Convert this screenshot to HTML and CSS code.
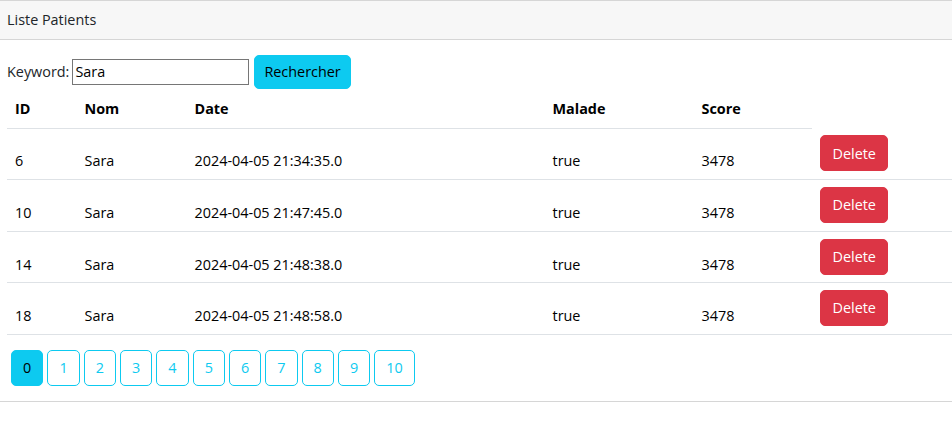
FILE: index.html
```html
<!DOCTYPE html>
<html lang="fr">
<head>
<meta charset="utf-8">
<title>Liste Patients</title>
<link rel="stylesheet" href="styles.css">
</head>
<body>
<div class="card">
  <div class="card-header">Liste Patients</div>
  <div class="card-body">
    <form class="search">
      <label class="search-label" for="kw">Keyword:</label>
      <input class="search-input" id="kw" type="text" value="Sara">
      <button class="btn btn-info" type="button">Rechercher</button>
    </form>
    <table class="table">
      <colgroup>
        <col class="c-id"><col class="c-nom"><col class="c-date"><col class="c-malade"><col class="c-score"><col class="c-action">
      </colgroup>
      <thead>
        <tr><th>ID</th><th>Nom</th><th>Date</th><th>Malade</th><th>Score</th></tr>
      </thead>
      <tbody>
        <tr><td>6</td><td>Sara</td><td>2024-04-05 21:34:35.0</td><td>true</td><td>3478</td><td class="action"><a class="btn btn-danger">Delete</a></td></tr>
        <tr><td>10</td><td>Sara</td><td>2024-04-05 21:47:45.0</td><td>true</td><td>3478</td><td class="action"><a class="btn btn-danger">Delete</a></td></tr>
        <tr><td>14</td><td>Sara</td><td>2024-04-05 21:48:38.0</td><td>true</td><td>3478</td><td class="action"><a class="btn btn-danger">Delete</a></td></tr>
        <tr><td>18</td><td>Sara</td><td>2024-04-05 21:48:58.0</td><td>true</td><td>3478</td><td class="action"><a class="btn btn-danger">Delete</a></td></tr>
      </tbody>
    </table>
    <ul class="pages">
      <li><a class="page active">0</a></li>
      <li><a class="page">1</a></li>
      <li><a class="page">2</a></li>
      <li><a class="page">3</a></li>
      <li><a class="page">4</a></li>
      <li><a class="page">5</a></li>
      <li><a class="page">6</a></li>
      <li><a class="page">7</a></li>
      <li><a class="page">8</a></li>
      <li><a class="page">9</a></li>
      <li><a class="page">10</a></li>
    </ul>
  </div>
</div>
</body>
</html>
```

FILE: styles.css
```css
* { box-sizing: border-box; }

html, body {
  margin: 0;
  padding: 0;
  background: #fff;
  overflow: hidden;
}

body {
  font-family: "Open Sans", "Noto Sans", sans-serif;
  font-size: 14.4px;
  line-height: 21.6px;
  color: #212529;
}

.card {
  width: 100%;
  border-top: 1px solid #d6d6d6;
  border-bottom: 1px solid #d6d6d6;
}

.card-header {
  height: 39px;
  padding: 0 7px;
  line-height: 38px;
  background: #f7f7f7;
  border-bottom: 1px solid #d6d6d6;
}

.card-body {
  padding: 15px 0 15px 7px;
}

.search {
  display: flex;
  align-items: baseline;
  margin: 0;
}

.search-label {
  margin-right: 3px;
}

.search-input {
  width: 177px;
  height: 26px;
  padding: 0 2px;
  border: 1px solid #767676;
  border-radius: 0;
  font-family: inherit;
  font-size: 14.4px;
  color: #000;
  margin: 0 5px 0 0;
}

.btn {
  display: inline-flex;
  align-items: center;
  justify-content: center;
  border: 1px solid transparent;
  border-radius: 5px;
  font-family: inherit;
  font-size: 14.4px;
  line-height: 21.6px;
  cursor: pointer;
  text-decoration: none;
}

.btn-info {
  height: 34px;
  padding: 0 9px;
  background: #0dcaf0;
  border-color: #0dcaf0;
  color: #000;
}

.btn-danger {
  height: 36px;
  padding: 0 11.5px;
  background: #dc3545;
  border-color: #dc3545;
  color: #fff;
}

.table {
  width: 100%;
  margin-top: 1px;
  border-collapse: collapse;
  table-layout: fixed;
  color: #000;
}

.c-id { width: 69.5px; }
.c-nom { width: 110px; }
.c-date { width: 358px; }
.c-malade { width: 149px; }
.c-score { width: 118.5px; }
.c-action { width: auto; }

.table th {
  text-align: left;
  font-weight: 700;
  padding: 8.4px 8px 8px;
  border-bottom: 1px solid #dee2e6;
}

.table td {
  padding: 7px 8px 7px;
  vertical-align: bottom;
  border-bottom: 1px solid #dee2e6;
}

.table td.action {
  vertical-align: top;
  padding: 7px 8px 7.6px;
}

.pages {
  list-style: none;
  display: flex;
  gap: 3.9px;
  margin: 15px 0 0;
  padding: 0 0 0 4px;
}

.page {
  display: flex;
  align-items: center;
  justify-content: center;
  height: 36px;
  padding: 0 11.1px;
  border: 1px solid #0dcaf0;
  border-radius: 5px;
  color: #0dcaf0;
}

.page.active {
  background: #0dcaf0;
  color: #000;
}
```
